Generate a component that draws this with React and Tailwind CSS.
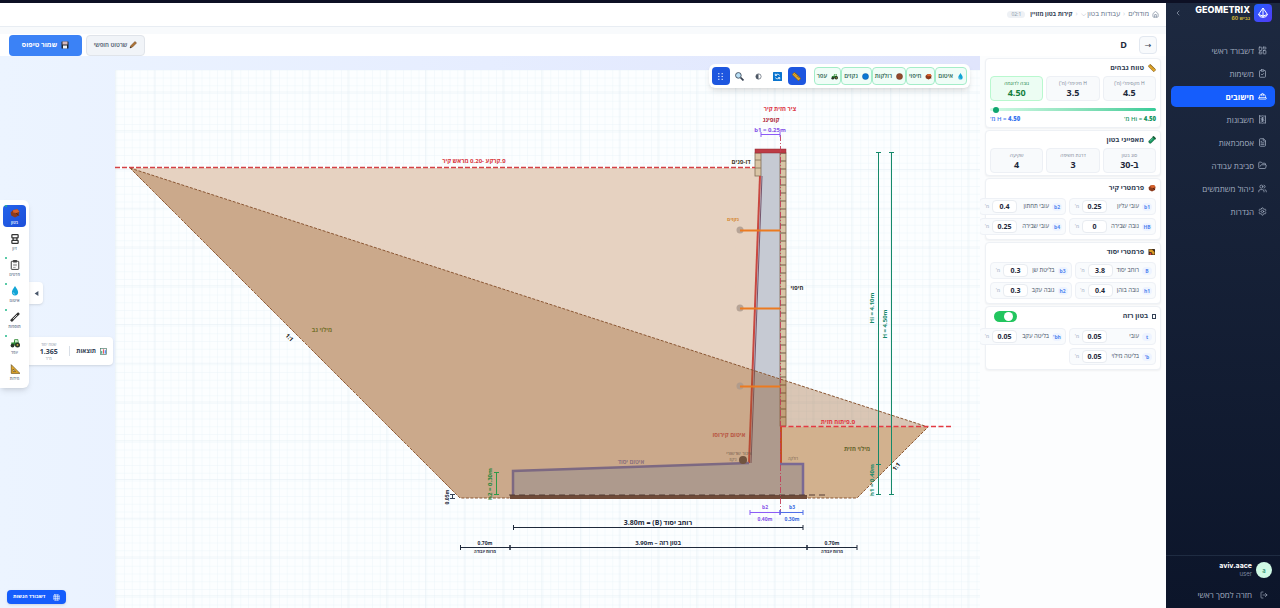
import React, { useState } from 'react';
import {
    LayoutDashboard, ClipboardCheck, HardHat, Receipt, FileText, FolderOpen,
    Users, Settings, LogOut, House, ChevronLeft, Grid3x3,
} from 'lucide-react';

const navItems = [
    { label: 'דשבורד ראשי', icon: LayoutDashboard },
    { label: 'משימות', icon: ClipboardCheck },
    { label: 'חישובים', icon: HardHat },
    { label: 'חשבונות', icon: Receipt },
    { label: 'אסמכתאות', icon: FileText },
    { label: 'סביבת עבודה', icon: FolderOpen },
    { label: 'ניהול משתמשים', icon: Users },
    { label: 'הגדרות', icon: Settings },
];

const glyphs = {
    ruler: <g transform="rotate(45 8 8)"><rect x="0" y="5" width="16" height="6" rx="1" fill="#e0a528" stroke="#6b4a12" /><path d="M3 5v3M6 5v2M9 5v3M12 5v2" stroke="#5b3d0d" /></g>,
    tube: <g transform="rotate(45 8 8)"><rect x="5" y="0" width="6" height="16" rx="3" fill="#15945f" stroke="#14532d" /><path d="M4 1.500h8" stroke="#14532d" strokeWidth="2" /><path d="M7 5v7" stroke="#a7f3d0" /></g>,
    rock: <g><path d="M1 7l4-4 7-1 3 4-1 6-6 3-6-3z" fill="#8c3b1c" /><path d="M5 3l7-1 3 4-5 2-5-1z" fill="#d9622b" /><path d="M10 8l4 4" stroke="#4a1f10" strokeWidth="1.500" /></g>,
    crane: <g><rect x="1" y="2" width="13" height="12" rx="1" fill="#3b2a1c" /><path d="M2 3h6l5 5v5H9l-1-4-5-1z" fill="#d99a26" /><circle cx="5" cy="12" r="2" fill="#ef4444" /></g>,
    drop: <g><path d="M8 0c3 5 5 7 5 10a5 5 0 0 1-10 0c0-3 2-5 5-10z" fill="#12a5d6" /><path d="M5 10a3 3 0 0 0 3 3" stroke="#bae6fd" fill="none" /></g>,
    brown: <circle cx="8" cy="8" r="7" fill="#914a2c" stroke="#6b3119" />,
    blue: <circle cx="8" cy="8" r="7" fill="#0878d4" stroke="#07539b" />,
    tractor: <g><path d="M2 7h4l1-5h6l1 6v4H2z" fill="#2f8a35" /><path d="M8 3h4l1 4H8z" fill="#c5ebc8" /><circle cx="4" cy="12" r="3" fill="#27352a" /><circle cx="12" cy="11" r="4" fill="#27352a" /><circle cx="12" cy="11" r="1.500" fill="#c9b037" /></g>,
    lens: <g><circle cx="6" cy="6" r="5" fill="#b9dff5" stroke="#374151" strokeWidth="1.500" /><path d="M10 10l5 5" stroke="#374151" strokeWidth="3" /></g>,
    contrast: <g><circle cx="8" cy="8" r="6" fill="#fff" stroke="#4b5563" strokeWidth="1.500" /><path d="M8 2a6 6 0 0 0 0 12z" fill="#4b5563" /></g>,
    refresh: <g><rect width="16" height="16" rx="1" fill="#0873ce" /><path d="M12 6A5 5 0 0 0 4 6M4 3v3h3M4 10a5 5 0 0 0 8 0M12 13v-3H9" stroke="#fff" strokeWidth="1.500" fill="none" /></g>,
    dots: <g fill="#fff">{[2, 7, 12].map((y) => <g key={y}><rect x="4" y={y} width="2" height="2" /><rect x="10" y={y} width="2" height="2" /></g>)}</g>,
    pencil: <g><path d="M2 14l2-5 8-8 3 3-8 8z" fill="#b07434" stroke="#5d3a1a" /><path d="M2 14l1-3 2 2z" fill="#222" /></g>,
    disk: <g><rect x="1" y="1" width="14" height="14" rx="1" fill="#23272f" /><rect x="3" y="1" width="10" height="6" fill="#d8b9bd" /><rect x="4" y="9" width="8" height="6" fill="#eef2f7" /></g>,
    rebar: <g fill="none" stroke="#333" strokeWidth="2"><rect x="3" y="1" width="10" height="5" rx="1" /><path d="M5 6v4M11 6v4" /><rect x="3" y="10" width="10" height="5" rx="1" /></g>,
    clipboard: <g><rect x="2" y="2" width="12" height="13" rx="1" fill="#fff" stroke="#333" strokeWidth="1.500" /><rect x="5" y="0" width="6" height="4" fill="#444" /><path d="M5 7h6M5 9h6M5 12h4" stroke="#777" /></g>,
    bone: <g><path d="M3 13L13 3" stroke="#333" strokeWidth="4" strokeLinecap="round" /><path d="M4 12l8-8" stroke="#ddd" strokeWidth="1.500" /><circle cx="3" cy="13" r="2" fill="#333" /><circle cx="13" cy="3" r="2" fill="#333" /></g>,
    square: <g><path d="M2 1v14h14z" fill="#e0a62c" stroke="#59420f" /><path d="M5 8v4h4z" fill="#fff" stroke="#59420f" /></g>,
    chart: <g><rect x="1" y="1" width="14" height="14" fill="#f1f5f9" stroke="#4b7a68" strokeWidth="1.500" /><rect x="3" y="7" width="2" height="6" fill="#15945f" /><rect x="7" y="3" width="2" height="10" fill="#ef4444" /><rect x="11" y="5" width="2" height="8" fill="#2563eb" /></g>,
};

function Glyph({ name, className = 'size-2' }) {
    return <svg viewBox="0 0 16 16" className={`${className} shrink-0`} aria-hidden="true">{glyphs[name]}</svg>;
}

function Sidebar() {
    return (
        <aside className="flex w-[114px] shrink-0 flex-col bg-gradient-to-b from-[#1d2940] to-[#0c152a] font-['Inter','Open_Sans','Noto_Sans',sans-serif] text-[#a3aec0]">
            <div className="flex items-center gap-1 px-2 pt-px">
                <span className="flex size-[18px] items-center justify-center rounded bg-gradient-to-br from-blue-600 to-indigo-600">
                    <svg viewBox="0 0 24 24" className="size-3" fill="none" stroke="#fff" strokeWidth="2" strokeLinejoin="round">
                        <path d="M12 2L3 15l4 5h10l4-5zM12 2v20M3 15l9 3 9-3" />
                    </svg>
                </span>
                <div className="flex-1">
                    <p className="text-[9px] leading-[10px] font-extrabold text-white">GEOMETRIX</p>
                    <p className="text-[5px] leading-[6px] font-bold text-[#d0b332]">גביש 60</p>
                </div>
                <button aria-label="Collapse"><ChevronLeft className="size-2" /></button>
            </div>
            <nav className="mt-[18px] flex flex-col gap-0.5 px-[5px]">
                {navItems.map(({ label, icon: Icon }, idx) => (
                    <a
                        key={label}
                        href="#"
                        className={`flex h-[21px] items-center gap-1 rounded-[5px] px-2 text-[8px] ${idx === 2 ? 'bg-[#155dfc] font-bold text-white' : ''}`}
                    >
                        <Icon className="size-[9px]" />
                        {label}
                    </a>
                ))}
            </nav>
            <div className="mt-auto border-t border-[#1f2c42] px-2 pt-1.5">
                <div className="flex items-center gap-1">
                    <span className="flex size-4 items-center justify-center rounded-full bg-[#d0fae5] text-[6px] text-[#087a5b]">a</span>
                    <div dir="ltr" className="text-right">
                        <p className="text-[7px] leading-2 font-bold text-white">aviv.aace</p>
                        <p className="text-[6px] leading-2 text-[#7d8aa0]">user</p>
                    </div>
                </div>
                <a href="#" className="mt-1 flex h-[26px] items-center gap-2 px-1 text-[8px]">
                    <LogOut className="size-2" />
                    חזרה למסך ראשי
                </a>
            </div>
        </aside>
    );
}

function TopBar() {
    return (
        <>
            <header className="flex h-6 items-center gap-[3px] border-b border-[#e8edf3] bg-white px-[7px] text-[7px] text-[#64748b]">
                <House className="size-[7px]" />
                <a href="#">מודולים</a>
                <span className="text-[#cbd5e1]">‹</span>
                <a href="#">עבודות בטון ⌵</a>
                <span className="text-[#cbd5e1]">‹</span>
                <b className="text-[6px] text-[#334155]">קירות בטון מזויין</b>
                <span className="mr-0.5 rounded-sm bg-[#eef1f5] px-1 text-[5px] text-[#8896a8]">02:1</span>
            </header>
            <div className="mt-[7px] flex h-[22px] items-center justify-between bg-white px-[9px]">
                <div className="flex items-center gap-3">
                    <button className="flex size-[18px] items-center justify-center rounded border border-[#e2e8f0] bg-[#f8fafc] text-[8px] text-[#334155]" aria-label="Back">
                        <span dir="ltr">→</span>
                    </button>
                    <h1 className="text-[9px] font-bold text-[#1e293b]">D</h1>
                </div>
                <div className="flex gap-1">
                    <button className="flex h-[21px] w-[59px] items-center justify-center gap-0.5 rounded border border-[#e0e4ea] bg-[#f1f4f8] text-[6px] font-semibold text-[#475569]">
                        <Glyph name="pencil" /> שרטוט חופשי
                    </button>
                    <button className="flex h-[21px] w-[73px] items-center justify-center gap-1 rounded bg-[#3b82f6] text-[7px] font-bold text-white">
                        <Glyph name="disk" /> שמור טיפוס
                    </button>
                </div>
            </div>
        </>
    );
}

function PanelCard({ title, icon, action, children }) {
    return (
        <section className="rounded border border-[#eef1f5] bg-white px-1 pt-1 pb-0.5 shadow-xs">
            <div className="flex h-[13px] items-start justify-between">
                <h2 className="flex items-center gap-1 text-[7px] leading-[10px] font-bold text-[#334155]">
                    {icon ? <Glyph name={icon} /> : <span className="h-[5px] w-1 border border-[#334155]" />}
                    {title}
                </h2>
                {action}
            </div>
            {children}
        </section>
    );
}

function Stat({ label, value, active }) {
    return (
        <div className={`flex h-[25px] flex-1 flex-col items-center justify-center rounded border ${active ? 'border-[#b9f8cf] bg-[#ecfdf3] text-[#15803d]' : 'border-[#edf0f5] bg-[#f8fafc] text-[#1e293b]'}`}>
            <span className={`text-[5px] leading-[8px] ${active ? '' : 'text-[#7b8798]'}`}>{label}</span>
            <b className="text-[9px] leading-[11px]">{value}</b>
        </div>
    );
}

function Field({ id, tag, label, value }) {
    return (
        <div className="flex h-[17px] items-center gap-[3px] rounded border border-[#eef1f6] bg-[#f9fbfd] px-[3px]">
            <span className="w-[10px] shrink-0 rounded-sm bg-[#eef4ff] text-center text-[5px] leading-[8px] font-bold text-[#5184ef]">{tag}</span>
            <label htmlFor={id} className="min-w-0 flex-1 text-[6px] whitespace-nowrap text-[#475569]">{label}</label>
            <input
                id={id}
                defaultValue={value}
                className="h-[13px] w-[25px] shrink-0 rounded-sm border border-[#e8ecf1] bg-white text-center text-[7px] font-bold text-[#1e293b]"
            />
            <span className="w-1.5 text-[5px] text-[#94a3b8]">מ'</span>
        </div>
    );
}

function ParamPanel() {
    const [lean, setLean] = useState(true);
    return (
        <aside className="flex w-[186px] shrink-0 flex-col gap-0.5 overflow-hidden bg-[#fcfdfe] px-[5px] pt-0.5">
            <PanelCard title="טווח גבהים" icon="ruler">
                <div className="flex gap-[3px]">
                    <Stat label="H מקסימלי (מ')" value="4.5" />
                    <Stat label="H מינימלי (מ')" value="3.5" />
                    <Stat label="גובה לדוגמה" value="4.50" active />
                </div>
                <input
                    type="range"
                    aria-label="גובה"
                    defaultValue="98"
                    className="mt-[7px] block h-[3px] w-full appearance-none rounded-full bg-gradient-to-l from-[#34cb98] to-[#d1fae5] [&::-webkit-slider-thumb]:size-[6px] [&::-webkit-slider-thumb]:appearance-none [&::-webkit-slider-thumb]:rounded-full [&::-webkit-slider-thumb]:bg-[#10a56f]"
                />
                <div className="mt-0.5 flex justify-between text-[6px] leading-[12px] font-semibold">
                    <span dir="ltr" className="text-[#15945f]">'מ Hi = <b>4.50</b></span>
                    <span dir="ltr" className="text-[#3b76ef]">'מ H = <b>4.50</b></span>
                </div>
            </PanelCard>
            <PanelCard title="מאפייני בטון" icon="tube">
                <div className="flex gap-[3px]">
                    <Stat label="סוג בטון" value="ב-30" />
                    <Stat label="דרגת חשיפה" value="3" />
                    <Stat label="שקיעה" value="4" />
                </div>
            </PanelCard>
            <PanelCard title="פרמטרי קיר" icon="rock">
                <div className="my-0.5 grid grid-cols-[87px_87px] gap-[3px]">
                    <Field id="b1" tag="b1" label="עובי עליון" value="0.25" />
                    <Field id="b2" tag="b2" label="עובי תחתון" value="0.4" />
                    <Field id="hb" tag="HB" label="גובה שבירה" value="0" />
                    <Field id="b4" tag="b4" label="עובי שבירה" value="0.25" />
                </div>
            </PanelCard>
            <PanelCard title="פרמטרי יסוד" icon="crane">
                <div className="my-0.5 grid grid-cols-2 gap-[3px]">
                    <Field id="B" tag="B" label="רוחב יסוד" value="3.8" />
                    <Field id="b3" tag="b3" label="בליטת שן" value="0.3" />
                    <Field id="h1" tag="h1" label="גובה בוהן" value="0.4" />
                    <Field id="h2" tag="h2" label="גובה עקב" value="0.3" />
                </div>
            </PanelCard>
            <PanelCard
                title="בטון רזה"
                action={
                    <button
                        role="switch"
                        aria-checked={lean}
                        aria-label="בטון רזה"
                        onClick={() => setLean(!lean)}
                        className={`ml-1 flex h-[11px] w-[23px] items-center rounded-full px-1 ${lean ? 'justify-start bg-[#22c55e]' : 'justify-end bg-gray-300'}`}
                    >
                        <span className="size-[9px] rounded-full bg-white" />
                    </button>
                }
            >
                <div className="mt-1 mb-0.5 grid grid-cols-[87px_87px] gap-[3px]">
                    <Field id="t" tag="t" label="עובי" value="0.05" />
                    <Field id="bh" tag="bh'" label="בליטה עקב" value="0.05" />
                    <Field id="bt" tag="b'" label="בליטה מילוי" value="0.05" />
                </div>
            </PanelCard>
        </aside>
    );
}

// Dimension line with end ticks, horizontal or vertical
function Dim({ x1, y1, x2, y2, color }) {
    const vertical = x1 === x2;
    const tx = vertical ? 2.5 : 0;
    const ty = vertical ? 0 : 2.5;
    return (
        <g stroke={color}>
            <line x1={x1} y1={y1} x2={x2} y2={y2} />
            <line x1={x1 - tx} y1={y1 - ty} x2={x1 + tx} y2={y1 + ty} />
            <line x1={x2 - tx} y1={y2 - ty} x2={x2 + tx} y2={y2 + ty} />
        </g>
    );
}

function T({ x, y, size = 6, color = '#1e293b', rotate, ltr, weight = 700, children }) {
    return (
        <text
            x={x}
            y={y}
            fontSize={size}
            fontWeight={weight}
            fill={color}
            textAnchor="middle"
            direction={ltr ? 'ltr' : 'rtl'}
            transform={rotate ? `rotate(${rotate} ${x} ${y})` : undefined}
        >
            {children}
        </text>
    );
}

function WallDrawing() {
    const bricks = Array.from({ length: 34 }, (_, i) => 153 + i * 8);
    return (
        <svg viewBox="115 70 865 538" preserveAspectRatio="xMinYMin slice" className="block h-full w-full bg-[#fcfeff]">
            <defs>
                <pattern id="minor" width="7.750" height="7.750" patternUnits="userSpaceOnUse">
                    <path d="M7.750 0H0V7.750" fill="none" stroke="#e9f3f7" strokeWidth="0.800" />
                </pattern>
                <pattern id="major" x="115" y="14" width="38.750" height="38.750" patternUnits="userSpaceOnUse">
                    <path d="M38.750 0H0V38.750" fill="none" stroke="#e0ebf1" strokeWidth="0.900" />
                </pattern>
            </defs>
            <rect x="115" y="70" width="1600" height="1200" fill="url(#minor)" />
            <rect x="115" y="70" width="1600" height="1200" fill="url(#major)" />

            {/* soil */}
            <polygon points="130,168 760,168 749,463 513,471 513,498 460,498" fill="#e5d0be" fillOpacity="0.950" />
            <polygon points="781,427 928,427 857,498 781,498" fill="#f1dfc5" />

            {/* wall and footing */}
            <polygon points="761,153 780,153 780,464 803,464 803,495 513,495 513,471 749,463" fill="#c6cad3" />
            <polygon points="755,372 780,380 780,464 803,464 803,495 513,495 513,471 749,463" fill="#9b9697" fillOpacity="0.250" />

            <g fill="#d9c5a6" stroke="#806d55" strokeWidth="0.800">
                <rect x="755" y="153" width="6" height="23" />
                <path d="M755 160h6M755 168h6" />
                <rect x="780" y="153" width="6" height="273" />
                {bricks.map((y) => <line key={y} x1="780" x2="786" y1={y} y2={y} strokeWidth="1.200" />)}
            </g>
            <rect x="755" y="149" width="31" height="4" fill="#bd3b45" stroke="#8f2933" strokeWidth="0.500" />
            <polyline points="760,176 749,463" fill="none" stroke="#c84740" strokeWidth="2" />
            <polyline points="762,176 751,463" fill="none" stroke="#74546b" strokeWidth="1" />
            <line x1="781" y1="427" x2="781" y2="463" stroke="#dc4b22" strokeWidth="2" />

            {/* excavation */}
            <polygon points="130,168 928,427 857,498 460,498" fill="#96541f" fillOpacity="0.330" stroke="#8a5632" strokeWidth="1" strokeDasharray="3 1.500" />
            <line x1="130" y1="168" x2="460" y2="498" stroke="#9d6b43" strokeWidth="0.800" strokeDasharray="2 2" />
            <polyline points="749,463 513,471 513,495" fill="none" stroke="#7d6982" strokeWidth="2.500" />
            <polyline points="780,464 803,464 803,495" fill="none" stroke="#7a6994" strokeWidth="2.500" />
            <rect x="510" y="495" width="297" height="4" fill="#6f4b39" />
            <line x1="509" y1="495" x2="825" y2="495" stroke="#533c34" strokeWidth="1.200" strokeDasharray="6 4" />

            {[231, 309, 387].map((y) => (
                <g key={y}>
                    <circle cx="740" cy={y - 1} r="3.500" fill="#aa998c" fillOpacity="0.800" />
                    <line x1="740" y1={y - 0.5} x2="780" y2={y - 0.5} stroke="#ec7a20" strokeWidth="1.800" />
                </g>
            ))}
            <circle cx="743" cy="460" r="4" fill="#70533f" />

            {/* ground levels and axis */}
            <line x1="115" y1="167.500" x2="755" y2="167.500" stroke="#d44145" strokeWidth="1.300" strokeDasharray="5 2" />
            <line x1="781" y1="426.500" x2="951" y2="426.500" stroke="#e33b43" strokeWidth="1.500" strokeDasharray="5 2.500" />
            <line x1="780.500" y1="135" x2="780.500" y2="514" stroke="#c23d58" strokeWidth="0.900" strokeDasharray="6 2 1 2" />

            <Dim x1={761} y1={134.5} x2={780} y2={134.5} color="#8b5cf6" />
            <Dim x1={750} y1={512.5} x2={780} y2={512.5} color="#8b5cf6" />
            <Dim x1={780} y1={512.5} x2={803} y2={512.5} color="#4f6ee8" />
            <Dim x1={513.5} y1={527.5} x2={803} y2={527.5} color="#1e293b" />
            <Dim x1={460.5} y1={547.5} x2={510} y2={547.5} color="#1e293b" />
            <Dim x1={510} y1={547.5} x2={807} y2={547.5} color="#1e293b" />
            <Dim x1={807} y1={547.5} x2={857} y2={547.5} color="#1e293b" />
            <Dim x1={878.5} y1={152.5} x2={878.5} y2={464.5} color="#15896a" />
            <Dim x1={878.5} y1={464.5} x2={878.5} y2={494.5} color="#15896a" />
            <Dim x1={891.5} y1={152.5} x2={891.5} y2={494.5} color="#15896a" />
            <Dim x1={496.5} y1={472.5} x2={496.5} y2={494.5} color="#2d9a48" />
            <Dim x1={452.5} y1={494.5} x2={452.5} y2={498.5} color="#334155" />

            <T x={780} y={111} color="#dc3545">ציר חזית קיר</T>
            <T x={771} y={122} color="#b02a3a">קופינג</T>
            <T x={770} y={132} color="#8450e8" ltr>b1 = 0.25m</T>
            <T x={741} y={164} color="#4a3b2a">דו-פנים</T>
            <T x={474} y={163} color="#d93640">פ.קרקע -0.20 מראש קיר</T>
            <T x={733} y={221} size={5} color="#d58830">נקזים</T>
            <T x={797} y={290} color="#333">חיפוי</T>
            <T x={322} y={332} color="#74702c">מילוי גב</T>
            <T x={288} y={339} ltr rotate={45} color="#222">1:1</T>
            <T x={838} y={424} color="#e0343e">פ.פיתוח חזית</T>
            <T x={857} y={451} color="#65652c">מילוי חזית</T>
            <T x={898} y={468} ltr rotate={-50} color="#222">1:1</T>
            <T x={729} y={437} color="#b85845">איטום קירוסו</T>
            <T x={739} y={455} size={5} color="#705b4b" weight={500}>צינור שרשורי</T>
            <T x={733} y={461} size={4} color="#705b4b" weight={500}>ניקוז</T>
            <T x={793} y={460} size={4} color="#705b4b" weight={500}>רולקה</T>
            <T x={631} y={464} color="#80677c" weight={600}>איטום יסוד</T>
            <T x={874} y={308} color="#15896a" ltr rotate={-90}>Hi = 4.10m</T>
            <T x={887} y={324} color="#15896a" ltr rotate={-90}>H = 4.50m</T>
            <T x={874} y={480} color="#15896a" ltr rotate={-90}>h1 = 0.40m</T>
            <T x={492} y={484} color="#25863b" ltr rotate={-90}>h2 = 0.30m</T>
            <T x={449} y={497} size={5} ltr rotate={-90}>0.05m</T>
            <T x={765} y={509} size={5} color="#8450e8" ltr>b2</T>
            <T x={765} y={521} size={5} color="#8450e8" ltr>0.40m</T>
            <T x={792} y={509} size={5} color="#3766de" ltr>b3</T>
            <T x={792} y={521} size={5} color="#3766de" ltr>0.30m</T>
            <T x={658} y={525} size={7}>רוחב יסוד (B) = 3.80m</T>
            <T x={658} y={545}>בטון רזה – 3.90m</T>
            <T x={485} y={545} size={5} ltr>0.70m</T>
            <T x={485} y={553} size={4}>מרווח עבודה</T>
            <T x={832} y={545} size={5} ltr>0.70m</T>
            <T x={832} y={553} size={4}>מרווח עבודה</T>
        </svg>
    );
}

function CanvasToolbar() {
    const layers = [
        { label: 'איטום', icon: 'drop' },
        { label: 'חיפוי', icon: 'rock' },
        { label: 'רולקות', icon: 'brown' },
        { label: 'נקזים', icon: 'blue' },
        { label: 'עפר', icon: 'tractor' },
    ];
    const tools = ['ruler', 'refresh', 'contrast', 'lens', 'dots'];
    return (
        <div className="absolute top-2 right-2.5 flex items-center gap-2 rounded-md bg-white p-[3px] shadow-md">
            <div className="flex">
                {layers.map(({ label, icon }) => (
                    <button key={label} className="flex h-[18px] items-center gap-1 rounded-sm border border-[#a4edc9] bg-[#f0fdf7] px-0.5 text-[6px] font-semibold text-[#28624e]">
                        <Glyph name={icon} className="size-[7px]" />
                        {label}
                    </button>
                ))}
            </div>
            <div className="flex gap-[1px]">
                {tools.map((name) => (
                    <button
                        key={name}
                        aria-label={name}
                        className={`flex size-[18px] items-center justify-center rounded-sm ${name === 'ruler' || name === 'dots' ? 'bg-[#1d56df]' : ''}`}
                    >
                        <Glyph name={name} className={name === 'contrast' ? 'size-[7px]' : 'size-[9px]'} />
                    </button>
                ))}
            </div>
        </div>
    );
}

function ToolDock() {
    const tools = [
        { label: 'בטון', icon: 'rock' },
        { label: 'זיון', icon: 'rebar' },
        { label: 'פרטים', icon: 'clipboard', dot: true },
        { label: 'איטום', icon: 'drop', dot: true },
        { label: 'תוספות', icon: 'bone', dot: true },
        { label: 'עפר', icon: 'tractor', dot: true },
        { label: 'מידות', icon: 'square' },
    ];
    return (
        <div dir="ltr" className="absolute top-36 left-0 flex items-start">
            <div className="z-10 flex flex-col gap-1 rounded-r-md bg-white px-[3px] py-[5px] shadow-md">
                {tools.map(({ label, icon, dot }, idx) => (
                    <button
                        key={label}
                        className={`relative flex h-[22px] w-[23px] flex-col items-center justify-center gap-0.5 rounded ${idx === 0 ? 'bg-gradient-to-br from-[#2563eb] to-[#1d4ed8] text-white' : 'text-[#64748b]'}`}
                    >
                        {(dot || idx === 0) && <span className="absolute top-0 left-0.5 size-[2px] rounded-full bg-[#22b98a]" />}
                        <Glyph name={icon} className="size-[10px]" />
                        <span className="text-[4px] leading-[5px] font-semibold">{label}</span>
                    </button>
                ))}
            </div>
            <button aria-label="Collapse tools" className="mt-[82px] flex h-[22px] w-[14px] items-center justify-center rounded-r bg-white shadow-sm">
                <svg viewBox="0 0 8 8" className="size-[5px]"><path d="M7 0v8L1 4z" fill="#475569" /></svg>
            </button>
        </div>
    );
}

function ResultsPill() {
    return (
        <div className="absolute top-[281px] left-0 flex h-7 w-[113px] items-center gap-1.5 rounded-r bg-white px-1.5 shadow-sm">
            <span className="flex shrink-0 items-center gap-1 text-[6px] font-bold text-[#334155]"><Glyph name="chart" className="size-[7px]" />תוצאות</span>
            <span className="h-2.5 w-px shrink-0 bg-[#d9dfe7]" />
            <span className="flex flex-1 flex-col items-center pl-7 text-[4px] leading-[5px] text-[#8793a5]">
                שטח יסוד
                <b className="text-[7px] leading-[9px] text-[#334155]">1.365</b>
                מ"ר
            </span>
        </div>
    );
}

export default function App() {
    return (
        <div dir="rtl" className="flex min-h-screen flex-col bg-[#f8fafc] font-['Open_Sans','Noto_Sans','DejaVu_Sans',sans-serif]">
            <div className="h-[3px] bg-[#0d1024]" />
            <div className="flex flex-1">
                <Sidebar />
                <main className="flex min-w-0 flex-1 flex-col">
                    <TopBar />
                    <div className="flex flex-1">
                        <ParamPanel />
                        <div className="relative min-w-0 flex-1 bg-gradient-to-r from-[#ecf4ff] via-[#e6edff] to-[#e0e5fc] pt-[14px] pl-[115px]">
                            <WallDrawing />
                            <CanvasToolbar />
                            <ResultsPill />
                            <ToolDock />
                            <button className="absolute bottom-1 left-[7px] flex h-[14px] items-center gap-2 rounded-sm bg-[#155dfc] px-1.5 text-[5px] font-bold text-white shadow-sm">
                                <Grid3x3 className="size-[7px]" />
                                דשבורד הגשות
                            </button>
                        </div>
                    </div>
                </main>
            </div>
        </div>
    );
}
